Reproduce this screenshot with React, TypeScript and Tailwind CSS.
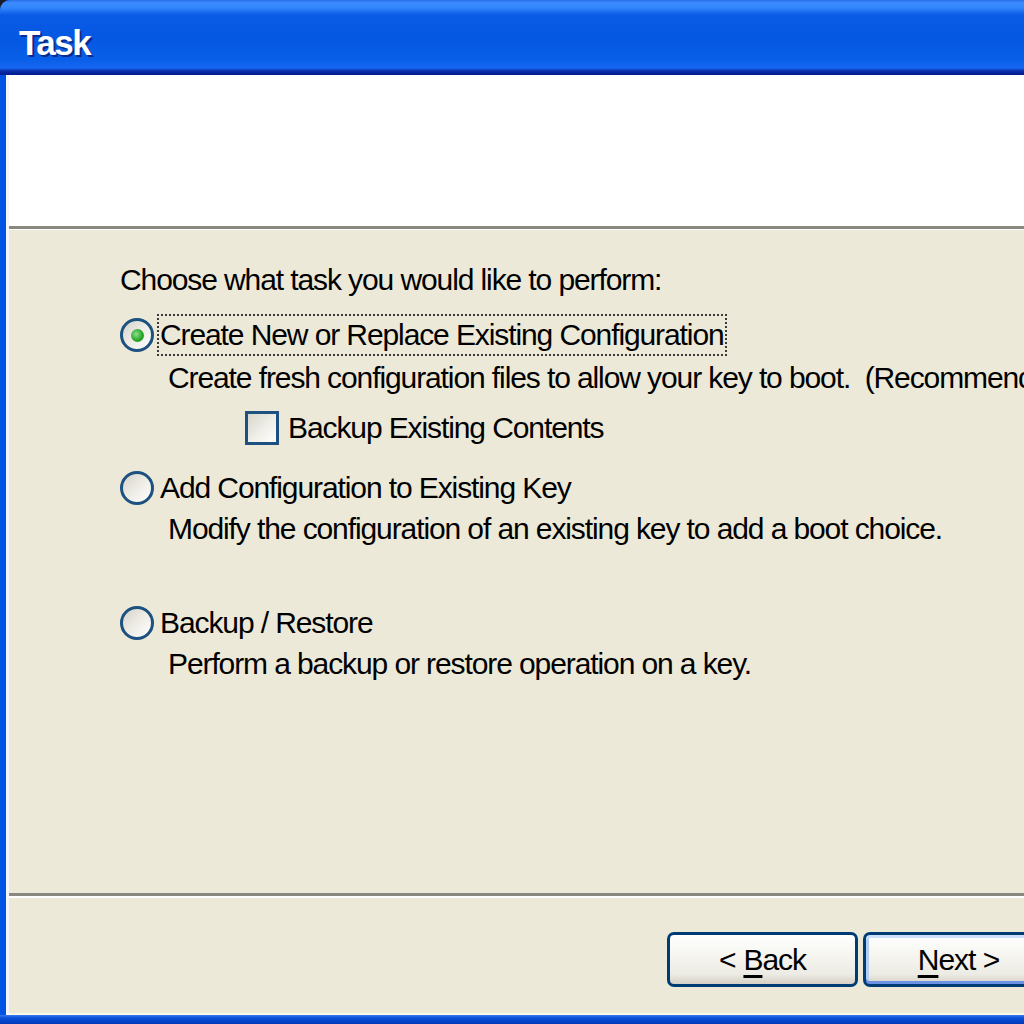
import React from "react";

const font = "[font-family:'Liberation_Sans',Arial,sans-serif]";

function Radio({ checked }: { checked?: boolean }) {
  return (
    <span className="flex h-[34px] w-[34px] shrink-0 items-center justify-center rounded-full border-[3px] border-[#1c5180] bg-[linear-gradient(135deg,#d4d2c8_0%,#eceae2_45%,#ffffff_100%)]">
      {checked && (
        <span className="h-[13px] w-[13px] rounded-full bg-[radial-gradient(circle_at_40%_40%,#8ee08e_0%,#2aa82a_55%,#1a8a1a_100%)]" />
      )}
    </span>
  );
}

function Checkbox() {
  return (
    <span className="h-[34px] w-[34px] shrink-0 border-[3px] border-[#1c5180] bg-[linear-gradient(135deg,#d8d6cc_0%,#eeede6_50%,#ffffff_100%)]" />
  );
}

function Option({
  label,
  checked,
  focused,
}: {
  label: string;
  checked?: boolean;
  focused?: boolean;
}) {
  return (
    <div className="flex items-center">
      <Radio checked={checked} />
      <span
        className={`ml-[3px] border-2 border-dotted px-[1px] leading-[38px] ${
          focused ? "border-[#3a3a3a]" : "border-transparent"
        }`}
      >
        {label}
      </span>
    </div>
  );
}

function Button({ children, primary }: { children: React.ReactNode; primary?: boolean }) {
  return (
    <button
      className={`flex h-[55px] w-[191px] shrink-0 items-center justify-center rounded-[7px] border-[3px] border-[#003c74] bg-[linear-gradient(to_bottom,#ffffff_0%,#f6f5f0_40%,#ecebe4_80%,#d6d0c5_100%)] text-[30px] tracking-[-1px] text-black ${
        primary ? "shadow-[inset_0_3px_0_#cee0fb,inset_0_-3px_0_#6c92e4,inset_3px_0_0_#b4cdf5,inset_-3px_0_0_#b4cdf5]" : ""
      }`}
    >
      {children}
    </button>
  );
}

export default function App() {
  return (
    <div className="h-[1024px] w-[1024px] bg-[#1a1a2a]">
      <div className={`flex h-[1024px] w-[1024px] flex-col overflow-hidden rounded-tl-[10px] bg-[#0054e3] ${font}`}>
        <div className="h-[75px] shrink-0 bg-[linear-gradient(to_bottom,#2a6fe8_0px,#3d8cff_3px,#3384fb_8px,#0a5ae6_15px,#0458e2_40px,#0a5fe8_60px,#1767f2_68px,#0a2ea8_71px,#001a8c_75px)] pl-[19px] pt-[23px]">
          <span className="text-[35px] font-bold leading-[40px] tracking-[-1.5px] text-white [text-shadow:2px_2px_0_#0c2a8c]">
            Task
          </span>
        </div>

        <div className="flex min-h-0 flex-1 pl-[6px]">
          <div className="flex flex-1 flex-col border-l-[3px] border-[#f4f6fc]">
            <div className="h-[151px] shrink-0 bg-white" />
            <div className="h-[3px] shrink-0 bg-[#8a897f]" />
            <div className="h-[1px] shrink-0 bg-white" />

            <div className="flex-1 bg-[#ece9d8] pl-[111px] pt-[31px] text-[30px] tracking-[-1.1px] text-black">
              <div className="leading-[38px]">Choose what task you would like to perform:</div>

              <div className="mt-[15px]">
                <Option label="Create New or Replace Existing Configuration" checked focused />
              </div>
              <div className="mt-[3px] whitespace-nowrap pl-[48px] leading-[38px]">
                Create fresh configuration files to allow your key to boot.&nbsp; (Recommended)
              </div>
              <div className="mt-[12px] flex items-center pl-[125px]">
                <Checkbox />
                <span className="ml-[9px] leading-[38px]">Backup Existing Contents</span>
              </div>

              <div className="mt-[20px]">
                <Option label="Add Configuration to Existing Key" />
              </div>
              <div className="mt-[1px] pl-[48px] leading-[38px]">
                Modify the configuration of an existing key to add a boot choice.
              </div>

              <div className="mt-[54px]">
                <Option label="Backup / Restore" />
              </div>
              <div className="mt-[1px] pl-[48px] leading-[38px]">
                Perform a backup or restore operation on a key.
              </div>
            </div>

            <div className="h-[3px] shrink-0 bg-[#8a897f]" />
            <div className="h-[2px] shrink-0 bg-white" />
            <div className="flex h-[115px] shrink-0 gap-[5px] bg-[#ece9d8] pl-[658px] pt-[34px]">
              <Button>
                &lt; <u className="ml-[8px] underline-offset-[5px]">B</u>ack
              </Button>
              <Button primary>
                <u className="underline-offset-[5px]">N</u>ext &gt;
              </Button>
            </div>
            <div className="h-[2px] shrink-0 bg-[#fbf8e8]" />
          </div>
        </div>
        <div className="h-[9px] shrink-0 bg-[linear-gradient(to_bottom,#3a7bf0_0px,#0a50d8_3px,#0038b8_9px)]" />
      </div>
    </div>
  );
}
